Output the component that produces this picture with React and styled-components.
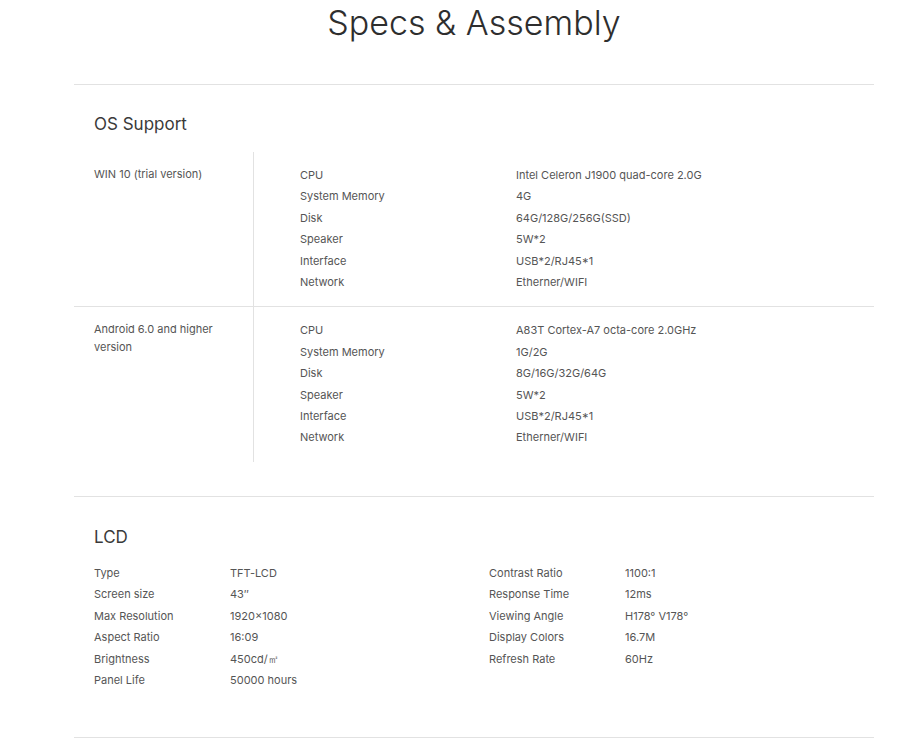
import styled, { createGlobalStyle } from "styled-components";

const GlobalStyle = createGlobalStyle`
    body {
        margin: 0;
        background: #fff;
        font-family: "Inter", "Noto Sans", sans-serif;
        color: #555;
    }
`;

const osSupport = [
    {
        name: "WIN 10 (trial version)",
        specs: [
            ["CPU", "Intel Celeron J1900 quad-core 2.0G"],
            ["System Memory", "4G"],
            ["Disk", "64G/128G/256G(SSD)"],
            ["Speaker", "5W*2"],
            ["Interface", "USB*2/RJ45*1"],
            ["Network", "Etherner/WIFI"],
        ],
    },
    {
        name: "Android 6.0 and higher version",
        specs: [
            ["CPU", "A83T Cortex-A7 octa-core 2.0GHz"],
            ["System Memory", "1G/2G"],
            ["Disk", "8G/16G/32G/64G"],
            ["Speaker", "5W*2"],
            ["Interface", "USB*2/RJ45*1"],
            ["Network", "Etherner/WIFI"],
        ],
    },
];

const lcdLeft = [
    ["Type", "TFT-LCD"],
    ["Screen size", "43″"],
    ["Max Resolution", "1920×1080"],
    ["Aspect Ratio", "16:09"],
    ["Brightness", "450cd/㎡"],
    ["Panel Life", "50000 hours"],
];

const lcdRight = [
    ["Contrast Ratio", "1100:1"],
    ["Response Time", "12ms"],
    ["Viewing Angle", "H178° V178°"],
    ["Display Colors", "16.7M"],
    ["Refresh Rate", "60Hz"],
];

export default function App(){
    return(
        <>
            <GlobalStyle />
            <Page>
                <Title>Specs &amp; Assembly</Title>

                <Section>
                    <Heading>OS Support</Heading>
                    {osSupport.map((os, i) => (
                        <OsRow key={os.name} last={i === osSupport.length - 1}>
                            <OsName>{os.name}</OsName>
                            <OsSpecs>
                                {os.specs.map(([label, value]) => (
                                    <SpecLine key={label} labelWidth={216}>
                                        <span>{label}</span>
                                        <span>{value}</span>
                                    </SpecLine>
                                ))}
                            </OsSpecs>
                        </OsRow>
                    ))}
                </Section>

                <Section lcd>
                    <Heading lcd>LCD</Heading>
                    <LcdGrid>
                        {[lcdLeft, lcdRight].map((col, i) => (
                            <div key={i}>
                                {col.map(([label, value]) => (
                                    <SpecLine key={label} labelWidth={136}>
                                        <span>{label}</span>
                                        <span>{value}</span>
                                    </SpecLine>
                                ))}
                            </div>
                        ))}
                    </LcdGrid>
                </Section>
                <Closer />
            </Page>
        </>
    );
}

const Page = styled.div`
    width: 800px;
    margin-left: 74px;
`;

const Title = styled.h1`
    margin: 0;
    height: 84px;
    padding-top: 3px;
    box-sizing: border-box;
    text-align: center;
    font-size: 34px;
    font-weight: 300;
    line-height: 40px;
    color: #2e2e2e;
`;

const Section = styled.section`
    border-top: 1px solid #e2e2e2;
    padding: ${({lcd}) => lcd ? "28px 0 46px" : "27px 0 34px"};
`;

const Heading = styled.h2`
    margin: 0 0 ${({lcd}) => lcd ? "14px" : "16px"} 20px;
    font-size: 17px;
    font-weight: 400;
    line-height: 24px;
    color: #3a3a3a;
`;

const OsRow = styled.div`
    display: grid;
    grid-template-columns: 179px 1fr;
    border-bottom: ${({last}) => last ? "none" : "1px solid #e2e2e2"};
`;

const OsName = styled.div`
    padding: 13px 20px 0 20px;
    font-size: 11px;
    line-height: 18px;
`;

const OsSpecs = styled.div`
    border-left: 1px solid #e2e2e2;
    padding: 13px 0 13px 46px;
`;

const SpecLine = styled.div`
    display: grid;
    grid-template-columns: ${({labelWidth}) => labelWidth}px 1fr;
    font-size: 11px;
    line-height: 21.4px;
    color: #555;
    white-space: nowrap;
`;

const LcdGrid = styled.div`
    display: grid;
    grid-template-columns: 395px 1fr;
    padding-left: 20px;
`;

const Closer = styled.div`
    border-top: 1px solid #e2e2e2;
`;
